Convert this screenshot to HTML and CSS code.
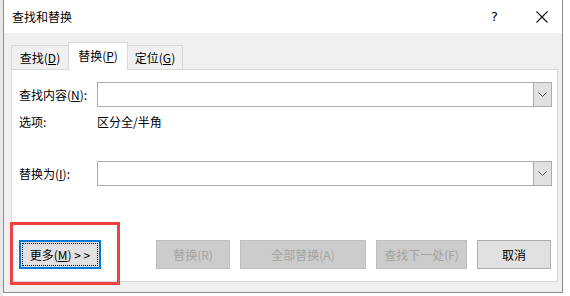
FILE: index.html
```html
<!DOCTYPE html>
<html lang="zh-CN">
<head>
<meta charset="utf-8">
<title>查找和替换</title>
<link rel="stylesheet" href="styles.css">
</head>
<body>
<div class="screen">
  <div class="dialog">
    <div class="titlebar">
      <span class="title">查找和替换</span>
      <span class="help">?</span>
      <span class="close">
        <svg width="12" height="12" viewBox="0 0 12 12"><path d="M0.5 0.5 L11.5 11.5 M11.5 0.5 L0.5 11.5" stroke="#111" stroke-width="1.1" fill="none"/></svg>
      </span>
    </div>
    <div class="body">
      <div class="tabs">
        <div class="tab">查找(<u>D</u>)</div>
        <div class="tab active">替换(<u>P</u>)</div>
        <div class="tab">定位(<u>G</u>)</div>
      </div>
      <div class="panel">
        <div class="row field-row">
          <label class="label">查找内容(<u>N</u>):</label>
          <div class="combo">
            <div class="combo-input"></div>
            <div class="combo-btn">
              <svg width="9" height="5" viewBox="0 0 9 5"><path d="M0.5 0.5 L4.5 4.5 L8.5 0.5" stroke="#555" stroke-width="1" fill="none"/></svg>
            </div>
          </div>
        </div>
        <div class="row options-row">
          <span class="label">选项:</span>
          <span class="opt-value">区分全/半角</span>
        </div>
        <div class="row field-row replace-row">
          <label class="label">替换为(<u>I</u>):</label>
          <div class="combo">
            <div class="combo-input"></div>
            <div class="combo-btn">
              <svg width="9" height="5" viewBox="0 0 9 5"><path d="M0.5 0.5 L4.5 4.5 L8.5 0.5" stroke="#555" stroke-width="1" fill="none"/></svg>
            </div>
          </div>
        </div>
        <div class="buttons">
          <button class="btn more"><span class="focus">更多(<u>M</u>)&nbsp;<span class="arrows">&gt; &gt;</span></span></button>
          <div class="spacer"></div>
          <button class="btn disabled w-replace">替换(R)</button>
          <button class="btn disabled w-all">全部替换(A)</button>
          <button class="btn disabled w-next">查找下一处(F)</button>
          <button class="btn cancel">取消</button>
        </div>
      </div>
    </div>
    <div class="highlight"></div>
  </div>
</div>
</body>
</html>
```

FILE: styles.css
```css
* { box-sizing: border-box; }
html, body { margin: 0; padding: 0; }
body {
  width: 570px;
  height: 296px;
  overflow: hidden;
  background: #f3f3f3;
  font-family: "Noto Sans CJK SC", "Noto Sans", sans-serif;
  font-size: 12px;
  color: #000;
}
.screen {
  padding-left: 3px;
  background: linear-gradient(to right, #e8e8e8 0 3px, #ffffff 3px);
  height: 296px;
}
.dialog {
  position: relative;
  width: 560px;
  height: 293px;
  background: #f0f0f0;
  border: 1px solid #8c8c8c;
  border-top: none;
  display: flex;
  flex-direction: column;
}
.titlebar {
  height: 33px;
  background: #fff;
  display: flex;
  align-items: center;
  padding-left: 8px;
  flex: none;
}
.title { flex: 1; font-size: 12px; padding-bottom: 1px; }
.help {
  font-family: "DejaVu Sans", sans-serif;
  font-size: 13px;
  width: 12px;
  margin-right: 33px;
  padding-bottom: 1px;
}
.close {
  width: 12px;
  height: 12px;
  margin-right: 14px;
  display: flex;
}
.body {
  flex: 1;
  padding: 9px 4px 0 7px;
  display: flex;
  flex-direction: column;
}
.tabs {
  display: flex;
  align-items: flex-end;
  height: 27px;
  position: relative;
  z-index: 1;
}
.tab {
  height: 24px;
  border: 1px solid #d9d9d9;
  border-bottom: none;
  background: #f0f0f0;
  display: flex;
  align-items: center;
  justify-content: center;
  padding-bottom: 1px;
}
.tab:first-child { width: 57px; border-right: none; }
.tab:last-child { width: 55px; border-left: none; }
.tab.active {
  width: 60px;
  height: 28px;
  background: #fff;
  margin-bottom: -1px;
  padding-bottom: 3px;
}
.panel {
  width: 547px;
  height: 213px;
  background: #fff;
  border: 1px solid #d9d9d9;
  padding: 12px 5px 0 7px;
  display: flex;
  flex-direction: column;
}
.row { display: flex; align-items: center; }
.label { width: 78px; flex: none; }
.field-row { height: 25px; }
.combo {
  flex: 1;
  height: 25px;
  display: flex;
  border: 1px solid #acacac;
  background: #fff;
}
.combo-input { flex: 1; }
.combo-btn {
  width: 18px;
  background: #e1e1e1;
  border-left: 1px solid #acacac;
  display: flex;
  align-items: center;
  justify-content: center;
}
.options-row { margin-top: 5px; height: 18px; }
.replace-row { margin-top: 31px; }
.buttons {
  margin-top: 54px;
  display: flex;
  align-items: center;
  gap: 10px;
  padding-right: 1px;
}
.spacer { flex: 1; }
.btn {
  height: 29px;
  font-family: inherit;
  font-size: 12px;
  padding: 0;
  margin: 0;
  display: flex;
  align-items: center;
  justify-content: center;
}
.more {
  width: 82px;
  background: #e1e1e1;
  border: 2px solid #0078d7;
  color: #000;
  padding: 1px;
}
.more .focus {
  width: 100%;
  height: 100%;
  border: 1px dotted #000;
  display: flex;
  align-items: center;
  justify-content: center;
  padding-bottom: 1px;
  white-space: pre;
}
.arrows { font-size: 12px; }
.disabled {
  background: #cccccc;
  border: 1px solid #bfbfbf;
  color: #a3a3a3;
}
.w-replace { width: 74px; }
.w-all { width: 126px; }
.w-next { width: 91px; }
.cancel {
  width: 74px;
  background: #e1e1e1;
  border: 1px solid #adadad;
  color: #000;
}
.highlight {
  position: absolute;
  left: 6px;
  top: 222px;
  width: 110px;
  height: 63px;
  border: 3px solid #f04040;
  pointer-events: none;
}
```
